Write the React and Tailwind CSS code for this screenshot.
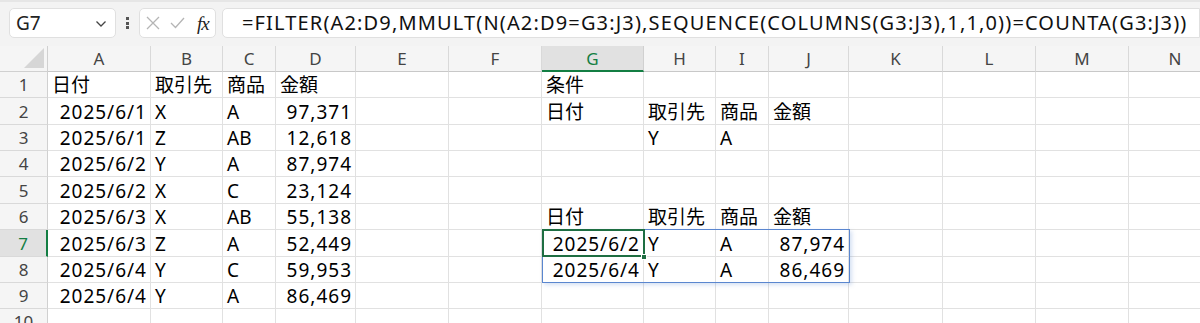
import React from "react";

const colW = [48, 103, 72, 53, 80, 93, 93, 102, 72, 53, 80, 94, 93, 93, 93];
const letters = ["A", "B", "C", "D", "E", "F", "G", "H", "I", "J", "K", "L", "M", "N"];
const rowH = ["h-[26px]", "h-[27px]", "h-[26px]", "h-[26px]", "h-[27px]", "h-[26px]", "h-[27px]", "h-[26px]", "h-[26px]", "h-[26px]"];

// cells: [colIndex, text, align]
const data = [
  [[0, "日付"], [1, "取引先"], [2, "商品"], [3, "金額"], [6, "条件"]],
  [[0, "2025/6/1", "r"], [1, "X"], [2, "A"], [3, "97,371", "r"], [6, "日付"], [7, "取引先"], [8, "商品"], [9, "金額"]],
  [[0, "2025/6/1", "r"], [1, "Z"], [2, "AB"], [3, "12,618", "r"], [7, "Y"], [8, "A"]],
  [[0, "2025/6/2", "r"], [1, "Y"], [2, "A"], [3, "87,974", "r"]],
  [[0, "2025/6/2", "r"], [1, "X"], [2, "C"], [3, "23,124", "r"]],
  [[0, "2025/6/3", "r"], [1, "X"], [2, "AB"], [3, "55,138", "r"], [6, "日付"], [7, "取引先"], [8, "商品"], [9, "金額"]],
  [[0, "2025/6/3", "r"], [1, "Z"], [2, "A"], [3, "52,449", "r"], [6, "2025/6/2", "r"], [7, "Y"], [8, "A"], [9, "87,974", "r"]],
  [[0, "2025/6/4", "r"], [1, "Y"], [2, "C"], [3, "59,953", "r"], [6, "2025/6/4", "r"], [7, "Y"], [8, "A"], [9, "86,469", "r"]],
  [[0, "2025/6/4", "r"], [1, "Y"], [2, "A"], [3, "86,469", "r"]],
  [],
];

const font = { fontFamily: '"Noto Sans", "Noto Sans CJK JP", sans-serif' };

function Cell({ w, text, align }) {
  return (
    <div
      className={`shrink-0 h-full border-r border-b border-[#e1e1e1] flex items-end pb-[2px] overflow-visible whitespace-nowrap text-[19px] leading-none text-black ${
        align === "r" ? "justify-end pr-[3px] tracking-[1px]" : "justify-start pl-[4px]"
      }`}
      style={{ width: w }}
    >
      {text}
    </div>
  );
}

export default function App() {
  return (
    <div className="w-[1200px] h-[323px] overflow-hidden bg-white relative" style={font}>
      {/* formula bar */}
      <div className="h-[46px] bg-[#f3f3f3] border-t-[2px] border-[#e6e6e6] flex items-start pt-[6px]">
        <div className="ml-[9px] w-[107px] h-[30px] bg-white border border-[#e0e0e0] rounded-[5px] flex items-center justify-between pl-[6px] pr-[8px]">
          <span className="text-[19px] text-[#222] leading-none">G7</span>
          <svg width="12" height="8" viewBox="0 0 12 8" className="mt-[2px]">
            <path d="M1.5 1.5 L6 6 L10.5 1.5" fill="none" stroke="#444" strokeWidth="1.3" />
          </svg>
        </div>
        <div className="w-[23px] h-[30px] flex flex-col items-center justify-center gap-[1.5px]">
          <div className="w-[3px] h-[3px] bg-[#555]" />
          <div className="w-[3px] h-[3px] bg-[#555]" />
          <div className="w-[3px] h-[3px] bg-[#555]" />
        </div>
        <div className="w-[77px] h-[30px] bg-white border border-[#e0e0e0] rounded-[5px] flex items-center pl-[6px]">
          <svg width="14" height="14" viewBox="0 0 14 14">
            <path d="M1 1 L13 13 M13 1 L1 13" stroke="#b5b5b5" strokeWidth="1.3" fill="none" />
          </svg>
          <svg width="15" height="12" viewBox="0 0 15 12" className="ml-[10px]">
            <path d="M1 6 L5.5 10.5 L14 1" stroke="#b5b5b5" strokeWidth="1.3" fill="none" />
          </svg>
          <span
            className="ml-[12px] text-[19px] italic text-[#222] leading-none tracking-[-1px]"
            style={{ fontFamily: '"Liberation Serif", serif' }}
          >
            fx
          </span>
        </div>
        <div className="ml-[6px] flex-1 h-[30px] bg-white border border-[#e0e0e0] rounded-l-[5px] flex items-center pl-[19px] whitespace-nowrap">
          <span className="text-[20px] leading-none text-[#111] tracking-[1.15px]">
            =FILTER(A2:D9,MMULT(N(A2:D9=G3:J3),SEQUENCE(COLUMNS(G3:J3),1,1,0))=COUNTA(G3:J3))
          </span>
        </div>
      </div>

      {/* column headers */}
      <div className="flex h-[26px] bg-[#f5f5f5]">
        <div className="shrink-0 h-full relative border-r border-b border-[#d0d0d0]" style={{ width: colW[0] }}>
          <svg width="20" height="20" viewBox="0 0 20 20" className="absolute right-[3px] bottom-[3px]">
            <path d="M20 0 L20 20 L0 20 Z" fill="#d6d6d6" />
          </svg>
        </div>
        {letters.map((l, i) =>
          l === "G" ? (
            <div
              key={l}
              className="shrink-0 h-full flex items-center justify-center bg-[#e1e1e1] border-b-[2px] border-r border-r-[#d0d0d0] border-b-[#137e43] text-[17px] text-[#137e43] leading-none"
              style={{ width: colW[i + 1] }}
            >
              {l}
            </div>
          ) : (
            <div
              key={l}
              className="shrink-0 h-full flex items-center justify-center border-r border-b border-[#d9d9d9] border-b-[#c8c8c8] text-[17px] text-[#444] leading-none"
              style={{ width: colW[i + 1] }}
            >
              {l}
            </div>
          )
        )}
      </div>

      {/* rows */}
      <div className="relative">
        {data.map((row, r) => {
          const map = {};
          row.forEach(([c, t, a]) => (map[c] = { t, a }));
          const sel = r === 6;
          return (
            <div key={r} className={`flex ${rowH[r]}`}>
              <div
                className={`shrink-0 h-full flex items-center justify-center text-[17px] leading-none border-b ${
                  sel
                    ? "bg-[#e1e1e1] text-[#137e43] border-r-[2px] border-r-[#137e43] border-b-[#d9d9d9]"
                    : "bg-[#f5f5f5] text-[#444] border-r border-[#d0d0d0] border-b-[#d9d9d9]"
                }`}
                style={{ width: colW[0] }}
              >
                {r + 1}
              </div>
              {letters.map((_, c) => (
                <Cell key={c} w={colW[c + 1]} text={map[c]?.t} align={map[c]?.a} />
              ))}
            </div>
          );
        })}

        {/* spill range outline */}
        <div className="absolute left-[542px] top-[157px] w-[308px] h-[54px] border border-[#5a86cf] shadow-[2px_2px_4px_rgba(90,134,207,0.25)] pointer-events-none" />
        {/* active cell */}
        <div className="absolute left-[542px] top-[157px] w-[103px] h-[28px] border-[2px] border-[#1e6e42] pointer-events-none" />
        <div className="absolute left-[641px] top-[182px] w-[6px] h-[6px] bg-[#1e6e42] border border-white pointer-events-none" />
      </div>
    </div>
  );
}
